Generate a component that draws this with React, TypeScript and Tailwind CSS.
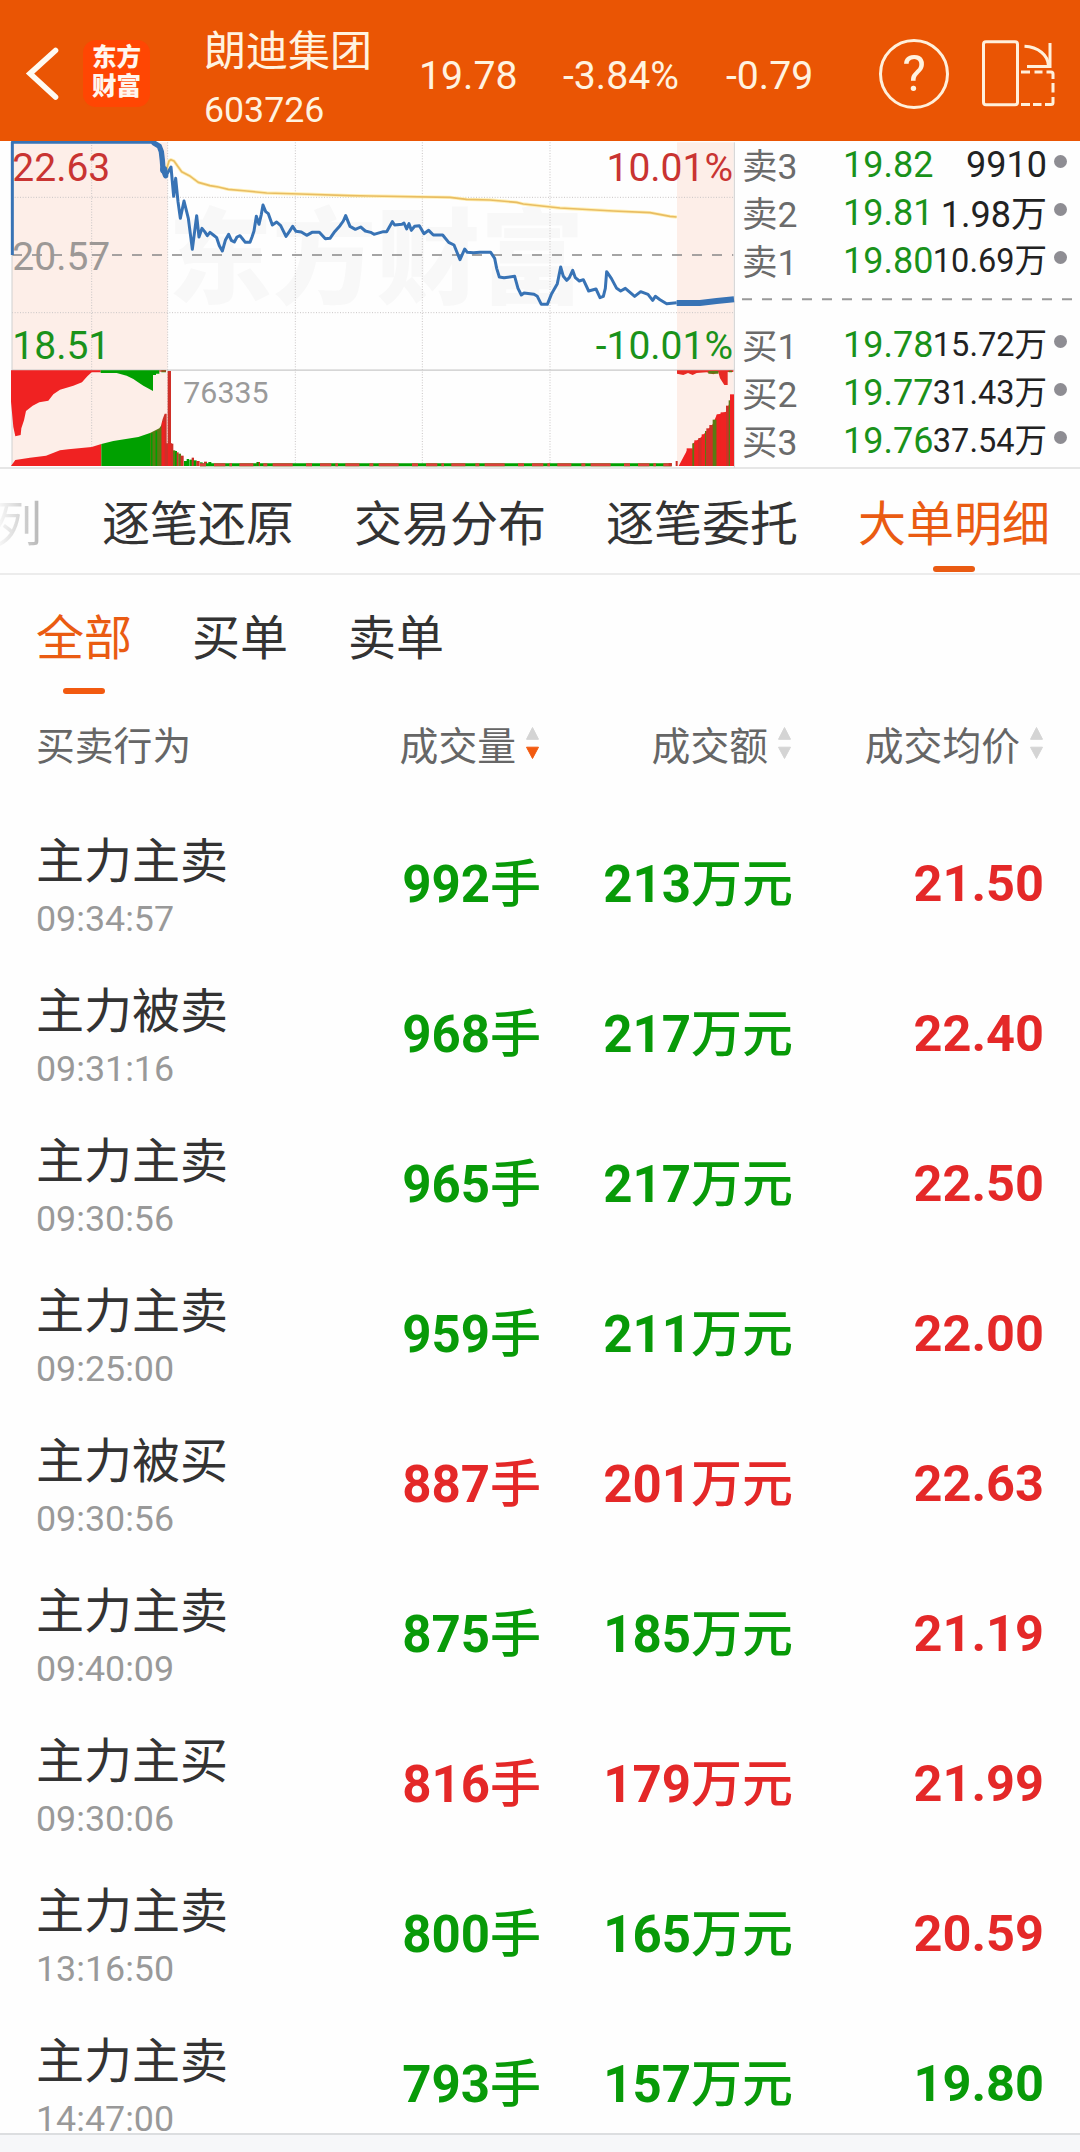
import React from "react";

type Tone = "up" | "down";

const toneClass: Record<Tone, string> = {
  up: "text-[#e42828]",
  down: "text-[#089a08]",
};

interface Order {
  action: string;
  time: string;
  volume: string;
  amount: string;
  price: string;
  tone: Tone;
  priceTone: Tone;
}

const orders: Order[] = [
  { action: "主力主卖", time: "09:34:57", volume: "992", amount: "213", price: "21.50", tone: "down", priceTone: "up" },
  { action: "主力被卖", time: "09:31:16", volume: "968", amount: "217", price: "22.40", tone: "down", priceTone: "up" },
  { action: "主力主卖", time: "09:30:56", volume: "965", amount: "217", price: "22.50", tone: "down", priceTone: "up" },
  { action: "主力主卖", time: "09:25:00", volume: "959", amount: "211", price: "22.00", tone: "down", priceTone: "up" },
  { action: "主力被买", time: "09:30:56", volume: "887", amount: "201", price: "22.63", tone: "up", priceTone: "up" },
  { action: "主力主卖", time: "09:40:09", volume: "875", amount: "185", price: "21.19", tone: "down", priceTone: "up" },
  { action: "主力主买", time: "09:30:06", volume: "816", amount: "179", price: "21.99", tone: "up", priceTone: "up" },
  { action: "主力主卖", time: "13:16:50", volume: "800", amount: "165", price: "20.59", tone: "down", priceTone: "up" },
  { action: "主力主卖", time: "14:47:00", volume: "793", amount: "157", price: "19.80", tone: "down", priceTone: "down" },
];

interface Quote {
  label: string;
  price: string;
  volume: string;
  volumeClass: string;
}

const sells: Quote[] = [
  { label: "卖3", price: "19.82", volume: "9910", volumeClass: "text-[36px]" },
  { label: "卖2", price: "19.81", volume: "1.98万", volumeClass: "text-[36px] mt-[2px]" },
  { label: "卖1", price: "19.80", volume: "10.69万", volumeClass: "text-[32.5px]" },
];

const buys: Quote[] = [
  { label: "买1", price: "19.78", volume: "15.72万", volumeClass: "text-[32.5px]" },
  { label: "买2", price: "19.77", volume: "31.43万", volumeClass: "text-[32.5px]" },
  { label: "买3", price: "19.76", volume: "37.54万", volumeClass: "text-[32.5px]" },
];

function QuoteRow({ label, price, volume, volumeClass }: Quote) {
  return (
    <div className="flex h-[48px] items-start whitespace-nowrap leading-[48px]">
      <span className="mt-[2px] w-[101px] text-[35.5px] text-[#6b6b6b]">{label}</span>
      <span className="w-[92px] text-[36px] text-[#1a921a]">{price}</span>
      <span className={`flex w-[112px] justify-end text-[#222] ${volumeClass}`}>{volume}</span>
      <span className="mt-[14px] ml-[7px] size-[13px] shrink-0 rounded-full bg-[#8e8d93]" />
    </div>
  );
}

function Header() {
  return (
    <header className="flex h-[141px] items-start bg-[#ea5504] text-[#fff3e0]">
      <svg className="mt-[44px] ml-[24px] h-[60px] w-[37px]" viewBox="0 0 37 60" fill="none" stroke="#fffaf2" strokeWidth="5.6" strokeLinecap="round">
        <path d="M31.5 6.5 6 29.6 31.5 53" strokeLinejoin="miter" />
      </svg>
      <div className="mt-[40px] ml-[22px] flex h-[67px] w-[67px] flex-col items-center justify-center rounded-[13px] bg-[#ff4603] pb-[3px] text-[24.5px] leading-[29px] font-black text-[#fff6ef]">
        <span>东方</span>
        <span>财富</span>
      </div>
      <div className="ml-[54px] w-[215px] pt-[24px]">
        <div className="text-[42px] leading-[56px]">朗迪集团</div>
        <div className="text-[35.7px] leading-[61px]">603726</div>
      </div>
      <div className="flex pt-[6px] text-[39.2px] leading-[141px]">
        <span className="w-[144px]">19.78</span>
        <span className="w-[163px]">-3.84%</span>
        <span className="w-[153px]">-0.79</span>
      </div>
      <div className="mt-[39px] flex size-[70px] items-center justify-center rounded-full border-[3px] border-[#fff0db] text-[50px] leading-[64px]">
        <span>?</span>
      </div>
      <svg className="mt-[38px] ml-[31px] h-[72px] w-[78px]" viewBox="0 0 78 72" fill="none" stroke="#fff0db" strokeWidth="3">
        <rect x="3.5" y="3.8" width="34" height="63" rx="2.5" />
        <path d="M44.5 8.3C58 9 68.2 17 68.5 28" />
        <path d="M70 5v23.6H47" />
        <path d="M41 34h9M54.500 34h8M66.500 34h4.500q2 0 2 2v5M73 45v9.500M73 59v5.500q0 2-2 2H65M61.500 66.500H53M50 66.500H41" />
      </svg>
    </header>
  );
}

const priceLine =
  "M37 360V22H460L476 32 484 44 486 70 490 100 497 124 513 96 521 184 527 130 534 200 541 250 552 198 565 250 577 343 590 242 597 306 606 280 614 290 622 302 630 292 640 300 650 308 658 332 667 348 676 316 686 298 694 316 703 321 711 306 720 302 728 312 736 322 750 322 756 306 762 288 769 244 777 268 784 238 789 210 797 230 805 236 817 270 830 261 842 272 858 304 868 290 878 274 888 289 904 291 920 301 936 292 958 292 976 311 990 310 1004 290 1020 272 1030 258 1037 242 1050 274 1066 283 1082 276 1096 288 1112 292 1122 298 1150 290 1160 290 1177 260 1184 270 1206 268 1212 264 1220 282 1227 266 1234 286 1244 274 1258 272 1272 296 1286 286 1300 300 1328 300 1346 322 1362 330 1380 374 1394 342 1402 352 1420 353 1440 352 1472 352 1484 370 1490 400 1498 426 1512 428 1544 424 1554 460 1564 480 1572 474 1602 478 1612 484 1624 508 1642 508 1654 478 1672 446 1682 396 1690 424 1700 436 1708 428 1718 406 1726 428 1738 438 1750 434 1766 468 1788 462 1800 488 1810 484 1816 460 1820 410 1834 430 1850 460 1862 468 1876 460 1904 484 1922 470 1944 478 1958 496 1966 484 1980 494 2000 506 2030 503";

const averageLine =
  "M497 112 507 78 513 74 522 78 545 110 568 122 595 142 630 152 655 156 685 163 740 168 800 174 900 177 1050 182 1110 183 1350 187 1400 193 1470 195 1550 202 1570 207 1680 219 1840 228 1950 233 2010 244 2030 246";

interface Bar {
  x: number;
  w: number;
  y: number;
  c: string;
}

const RED = "#f02222";
const DARK_RED = "#cf2f28";
const GREEN = "#00a000";
const OLIVE = "#5a7a12";

const auctionBars: Bar[] = [
  { x: 515, w: 4, y: 926, c: DARK_RED },
  { x: 519, w: 6, y: 946, c: OLIVE },
  { x: 525, w: 5, y: 948, c: GREEN },
  { x: 530, w: 5, y: 952, c: DARK_RED },
  { x: 535, w: 7, y: 956, c: OLIVE },
  { x: 542, w: 8, y: 962, c: DARK_RED },
  { x: 552, w: 8, y: 978, c: GREEN },
  { x: 560, w: 6, y: 972, c: GREEN },
  { x: 568, w: 7, y: 974, c: GREEN },
  { x: 575, w: 6, y: 968, c: DARK_RED },
  { x: 581, w: 8, y: 976, c: GREEN },
  { x: 589, w: 9, y: 978, c: DARK_RED },
  { x: 600, w: 7, y: 982, c: GREEN },
  { x: 612, w: 8, y: 980, c: DARK_RED },
  { x: 625, w: 8, y: 981, c: GREEN },
];

const closingBars: Bar[] = [
  { x: 2060, w: 18, y: 940, c: RED },
  { x: 2077, w: 6, y: 925, c: OLIVE },
  { x: 2083, w: 12, y: 916, c: RED },
  { x: 2095, w: 10, y: 909, c: DARK_RED },
  { x: 2105, w: 10, y: 898, c: RED },
  { x: 2115, w: 4, y: 888, c: OLIVE },
  { x: 2119, w: 9, y: 880, c: DARK_RED },
  { x: 2128, w: 10, y: 870, c: DARK_RED },
  { x: 2138, w: 12, y: 854, c: OLIVE },
  { x: 2150, w: 12, y: 838, c: RED },
  { x: 2162, w: 16, y: 832, c: RED },
  { x: 2178, w: 8, y: 812, c: DARK_RED },
  { x: 2186, w: 4, y: 796, c: OLIVE },
  { x: 2190, w: 12, y: 778, c: RED },
];

function Chart() {
  return (
    <svg className="h-[327px] w-[735px] shrink-0" viewBox="0 18 2205 981">
      <rect x="36" y="22" width="467" height="971" fill="#fdeee8" />
      <rect x="2031" y="22" width="170" height="971" fill="#fdeee8" />
      <text x="505" y="482" fontSize="312" fontWeight="900" fill="#f8f8f8">
        东方财富
      </text>
      <g stroke="#c9c5c5" strokeWidth="3" strokeDasharray="3 5">
        <path d="M275 22V993M503 22V993M886 22V993M1267 22V993M1650 22V993" />
        <path d="M36 187H2203M36 533H2203" />
      </g>
      <path d="M36 360H2200" stroke="#888" strokeWidth="4.500" strokeDasharray="30 30" />
      <path d="M36 705.500H2203" stroke="#c8c8c8" strokeWidth="4" />
      <path d="M2203 22V998M36 360V993" stroke="#d0d0d0" strokeWidth="3" />

      <path d="M33 706H302V712H275L262 724 246 742 220 752 180 764 160 778 145 797 118 802 98 812 78 828 72 856 64 880 62 900 46 904 40 876 33 800Z" fill={RED} />
      <path d="M302 706H459V768L448 762 430 752 412 740 400 732 380 722 350 714H302Z" fill={GREEN} />
      <path d="M459 706H478V716H468V720H459ZM484 706h14v6h-14z" fill={GREEN} />
      <path d="M478 706h20v4h-20z" fill={DARK_RED} />
      <path d="M33 993 46 975 90 968 138 962 180 946 205 943 275 936 304 927V993Z" fill={RED} />
      <path d="M304 927 340 918 415 906 450 894V993H304Z" fill={GREEN} />
      <path d="M450 894 478 880 486 868V993H450Z" fill={OLIVE} />
      <path d="M455 895V993M469 889V993" stroke={GREEN} strokeWidth="5" />
      <path d="M484 868 488 852 494 836H500V925H503V708H513V925H516V993H484Z" fill={DARK_RED} />
      <path d="M490 860V993M508 926V993" stroke={RED} strokeWidth="8" />
      {auctionBars.map((b) => (
        <rect key={b.x} x={b.x} y={b.y} width={b.w + 1} height={993 - b.y} fill={b.c} />
      ))}
      <path d="M600 989H2015" stroke={GREEN} strokeWidth="9" />
      <path d="M600 989H2015" stroke="#d9413a" strokeWidth="9" strokeDasharray="18 24 34 12 8 22 42 30 12 16 60 40" />
      <path d="M770 993v-12h10v12zM2006 984h9v9h-9zM2027 978h6v15h-6z" fill={DARK_RED} />
      <path d="M770 993v-12h6v12z" fill={GREEN} />
      <path d="M2036 993 2062 944H2078V926L2104 906 2138 868 2150 840 2178 830 2190 800H2201V993Z" fill={RED} />
      {closingBars.map((b) => (
        <rect key={b.x} x={b.x} y={b.y} width={b.w} height={993 - b.y} fill={b.c} />
      ))}
      <path d="M2031 706H2200V711H2183V750H2173L2160 730 2155 712 2140 718 2120 712 2090 714 2078 720 2064 714 2050 720 2031 716Z" fill="#e82a24" />
      <path d="M2125 708h30v8h-30zM2186 707h10v5h-10z" fill={OLIVE} />

      <path d={averageLine} fill="none" stroke="#fff0b8" strokeWidth="10" strokeLinejoin="round" />
      <path d={averageLine} fill="none" stroke="#e9bd62" strokeWidth="5" strokeLinejoin="round" />
      <path d={priceLine} fill="none" stroke="#3873b5" strokeWidth="9" strokeLinejoin="round" />
      <path d="M462 24 478 34 484 50 487 76 489 102 497 122" fill="none" stroke="#3873b5" strokeWidth="16" strokeLinecap="round" strokeLinejoin="round" />
      <circle cx="491" cy="104" r="11" fill="#3873b5" />
      <path d="M2030 504H2100L2150 498 2202 493" fill="none" stroke="#3873b5" strokeWidth="18" />

      <g fontSize="117">
        <text x="37" y="138" fill="#c93432">22.63</text>
        <text x="37" y="405" fill="#9c9896">20.57</text>
        <text x="37" y="672" fill="#1a921a">18.51</text>
        <text x="2199" y="138" fill="#c93432" textAnchor="end">10.01%</text>
        <text x="2199" y="672" fill="#1a921a" textAnchor="end">-10.01%</text>
      </g>
      <text x="550" y="803" fontSize="91" fill="#9a9a9a">76335</text>
    </svg>
  );
}

function OrderBook() {
  return (
    <div className="flex flex-1 flex-col pl-[7px]">
      {sells.map((q) => (
        <QuoteRow key={q.label} {...q} />
      ))}
      <svg className="h-[36px] w-[331px]" viewBox="0 0 331 36">
        <path d="M0 14.300H331" stroke="#999" strokeWidth="2" strokeDasharray="10 10" />
      </svg>
      {buys.map((q) => (
        <QuoteRow key={q.label} {...q} />
      ))}
    </div>
  );
}

function SortArrows({ active = false }: { active?: boolean }) {
  return (
    <svg className="mt-[33px] h-[34px] w-[13px] shrink-0" viewBox="0 0 13 34">
      <path d="M6.500 1.500 12.500 13.300H.5Z" fill="#d4d4d4" stroke="#d4d4d4" strokeLinejoin="round" />
      <path d="M6.500 32.500 12.500 21.200H.5Z" fill={active ? "#f25a10" : "#d4d4d4"} stroke={active ? "#f25a10" : "#d4d4d4"} strokeLinejoin="round" />
    </svg>
  );
}

function Tabs() {
  return (
    <nav className="relative flex h-[106px] w-full gap-[60px] overflow-hidden border-b-2 border-[#ececec] pt-[3px] text-[48px] leading-[106px] whitespace-nowrap text-[#333]">
      <span className="-ml-[6px] bg-linear-to-r from-[#ffffff] to-[#b4b4b4] bg-clip-text text-transparent">列</span>
      <span>逐笔还原</span>
      <span>交易分布</span>
      <span>逐笔委托</span>
      <span className="relative text-[#ea5b12]">
        大单明细
        <i className="absolute bottom-[1px] left-[75px] h-[6px] w-[42px] rounded-full bg-[#ea5b12]" />
      </span>
    </nav>
  );
}

function SubTabs() {
  return (
    <div className="flex h-[118px] gap-[60px] pt-[4px] pl-[36px] text-[48px] leading-[120px] text-[#333]">
      <span className="relative h-[115px] text-[#ea5b12]">
        全部
        <i className="absolute bottom-0 left-[27px] h-[6px] w-[42px] rounded-full bg-[#f25a10]" />
      </span>
      <span>买单</span>
      <span>卖单</span>
    </div>
  );
}

function TableHead() {
  return (
    <div className="flex h-[117px] text-[38.8px] leading-[107px] text-[#666]">
      <span className="w-[300px] pl-[36px]">买卖行为</span>
      <span className="flex w-[239px] justify-end gap-[10px]">
        成交量
        <SortArrows active />
      </span>
      <span className="flex w-[252px] justify-end gap-[10px]">
        成交额
        <SortArrows />
      </span>
      <span className="flex w-[252px] justify-end gap-[10px]">
        成交均价
        <SortArrows />
      </span>
    </div>
  );
}

function OrderRow({ order }: { order: Order }) {
  return (
    <div className="flex h-[150px] shrink-0 items-start">
      <div className="w-[300px] pt-[20px] pl-[36px]">
        <div className="text-[48px] leading-[64px] text-[#333]">{order.action}</div>
        <div className="mt-px text-[35.8px] leading-[48px] text-[#999]">{order.time}</div>
      </div>
      <div className={`w-[241px] text-right text-[51px] leading-[150px] font-bold ${toneClass[order.tone]}`}>
        {order.volume}
        <span className="font-medium">手</span>
      </div>
      <div className={`w-[252px] text-right text-[51px] leading-[150px] font-bold ${toneClass[order.tone]}`}>
        {order.amount}
        <span className="font-medium">万元</span>
      </div>
      <div className={`-mt-px w-[251px] text-right text-[50.5px] leading-[150px] font-bold ${toneClass[order.priceTone]}`}>{order.price}</div>
    </div>
  );
}

export default function App() {
  return (
    <div className="flex h-[2152px] w-[1080px] flex-col overflow-hidden bg-[#fefefe] font-['Roboto','Noto_Sans_CJK_SC',sans-serif]">
      <Header />
      <section className="flex h-[328px] border-b-2 border-[#e6e6e6]">
        <Chart />
        <OrderBook />
      </section>
      <Tabs />
      <SubTabs />
      <TableHead />
      <main className="flex h-[1323px] flex-col overflow-hidden">
        {orders.map((o, i) => (
          <OrderRow key={i} order={o} />
        ))}
      </main>
      <footer className="flex-1 border-t-2 border-[#dcdee0] bg-[#f6f7f9]" />
    </div>
  );
}
